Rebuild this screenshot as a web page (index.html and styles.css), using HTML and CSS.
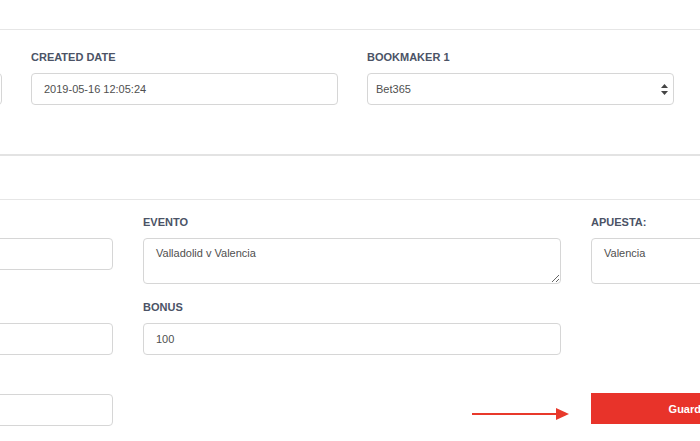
FILE: index.html
```html
<!DOCTYPE html>
<html lang="es">
<head>
  <meta charset="UTF-8" />
  <meta name="viewport" content="width=device-width, initial-scale=1.0"/>
  <title>Editar apuesta</title>
  <link rel="stylesheet" href="styles.css">
</head>
<body>
  <div class="page">
    <div class="card card-top">
      <div class="row-3">
        <div class="field">
          <label></label>
          <input type="text" value="">
        </div>
        <div class="field">
          <label>Created date</label>
          <input type="text" value="2019-05-16 12:05:24">
        </div>
        <div class="field">
          <label>Bookmaker 1</label>
          <div class="select-wrap">
            <select>
              <option>Bet365</option>
              <option>William Hill</option>
              <option>Bwin</option>
            </select>
            <svg class="select-arrows" width="7" height="11" viewBox="0 0 7 11">
              <polygon points="3.5,0 7,4 0,4" fill="#444"/>
              <polygon points="0,7 7,7 3.5,11" fill="#444"/>
            </svg>
          </div>
        </div>
      </div>
    </div>

    <div class="card card-bet">
      <div class="grid-bet">
        <div class="field">
          <label></label>
          <input type="text" value="">
        </div>
        <div class="field">
          <label>Evento</label>
          <textarea>Valladolid v Valencia</textarea>
        </div>
        <div class="field">
          <label>Apuesta:</label>
          <textarea>Valencia</textarea>
        </div>

        <div class="field">
          <label></label>
          <input type="text" value="">
        </div>
        <div class="field">
          <label>Bonus</label>
          <input type="text" value="100">
        </div>
        <div></div>

        <div class="field">
          <label></label>
          <input type="text" value="">
        </div>
        <div></div>
        <div class="field save-cell">
          <svg class="hint-arrow" width="97" height="12" viewBox="0 0 97 12">
            <line x1="0" y1="6" x2="86" y2="6" stroke="#e8392b" stroke-width="2"/>
            <polygon points="84,0 97,6 84,12" fill="#e8392b"/>
          </svg>
          <button class="btn-save">Guardar</button>
        </div>
      </div>
    </div>
  </div>
</body>
</html>
```

FILE: styles.css
```css
body {
  margin: 0;
  padding: 0;
  background: #fff;
  font-family: 'Liberation Sans', Arial, sans-serif;
  overflow: hidden;
}

.page {
  margin-left: -305px;
  width: 1400px;
  padding-top: 29px;
}

.card {
  border-top: 1px solid #e6e6e6;
}

.card-top {
  padding: 20px 0 49px;
  border-bottom: 2px solid #e3e3e3;
}

.card-bet {
  margin-top: 43px;
  padding-top: 15px;
}

.row-3 {
  display: grid;
  grid-template-columns: repeat(3, 307px);
  column-gap: 29px;
}

.grid-bet {
  display: grid;
  grid-template-columns: repeat(3, 418px);
  column-gap: 30px;
  row-gap: 16px;
  align-items: start;
}

.field {
  display: flex;
  flex-direction: column;
}

label {
  display: block;
  min-height: 14px;
  font-size: 11px;
  line-height: 14px;
  font-weight: 700;
  text-transform: uppercase;
  color: #4b5366;
  margin-bottom: 9px;
}

input,
select,
textarea {
  box-sizing: border-box;
  width: 100%;
  font-family: 'Liberation Sans', Arial, sans-serif;
  font-size: 11px;
  color: #4f4f4f;
  background: #fff;
  border: 1px solid #d6d6d6;
  border-radius: 4px;
  outline: none;
}

input {
  height: 32px;
  padding: 0 12px;
}

textarea {
  height: 46px;
  padding: 7px 12px;
  line-height: 14px;
  resize: vertical;
}

.select-wrap {
  position: relative;
}

select {
  height: 32px;
  padding: 0 8px;
  appearance: none;
  -webkit-appearance: none;
}

.select-arrows {
  position: absolute;
  right: 6px;
  top: 11px;
  pointer-events: none;
}

.save-cell {
  position: relative;
}

.btn-save {
  margin-top: 22px;
  width: 198px;
  height: 31px;
  border: none;
  border-radius: 0;
  background: #e8332a;
  color: #fff;
  font-family: 'Liberation Sans', Arial, sans-serif;
  font-size: 11px;
  font-weight: 700;
  cursor: pointer;
}

.hint-arrow {
  position: absolute;
  left: -119px;
  top: 37px;
}
```
